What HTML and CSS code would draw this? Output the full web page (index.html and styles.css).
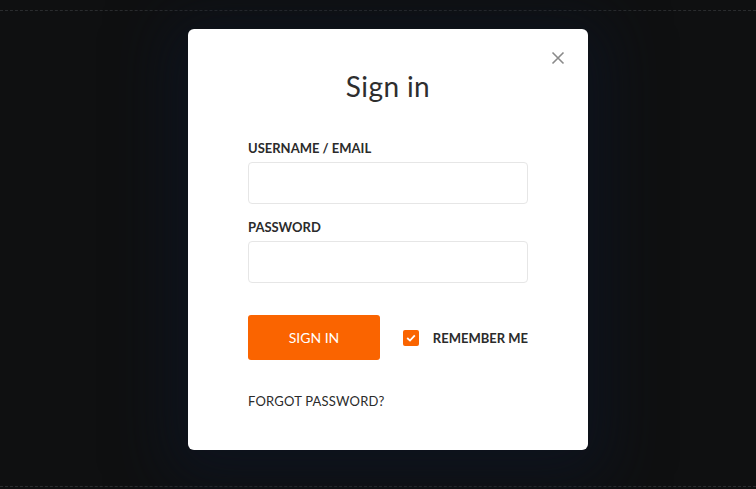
FILE: index.html
```html
<!DOCTYPE html>
<html lang="en">
<head>
  <meta charset="UTF-8" />
  <meta name="viewport" content="width=device-width, initial-scale=1.0" />
  <title>Sign in</title>
  <link rel="stylesheet" href="styles.css">
</head>
<body>
  <div class="page">
    <div class="modal">
      <button class="close" type="button" aria-label="Close">
        <svg width="14" height="14" viewBox="0 0 14 14"><path d="M1.5 1.5 L12.5 12.5 M12.5 1.5 L1.5 12.5" stroke="#8a8a8a" stroke-width="1.6" fill="none"/></svg>
      </button>
      <h2>Sign in</h2>
      <form>
        <label for="username">USERNAME / EMAIL</label>
        <input type="text" id="username" name="username" />

        <label for="password">PASSWORD</label>
        <input type="password" id="password" name="password" />

        <div class="actions">
          <button type="submit">SIGN IN</button>
          <label class="remember">
            <span class="box">
              <svg width="10" height="8" viewBox="0 0 10 8"><path d="M1.2 4 L4 6.6 L8.8 1.4" stroke="#fff" stroke-width="1.8" fill="none"/></svg>
            </span>
            REMEMBER ME
          </label>
        </div>

        <a class="forgot" href="#">FORGOT PASSWORD?</a>
      </form>
    </div>
  </div>
</body>
</html>
```

FILE: styles.css
```css
html, body {
  margin: 0;
  height: 100%;
}
body {
  background-color: #0f1011;
  font-family: Lato, "Noto Sans", sans-serif;
  color: #2b2b2b;
  overflow: hidden;
}
.page {
  margin-top: 10px;
  height: 477px;
  border-top: 1px dashed #2a2c2e;
  border-bottom: 1px dashed #2a2c2e;
  box-sizing: border-box;
  padding-top: 18px;
  padding-left: 188px;
}
.modal {
  position: relative;
  width: 400px;
  height: 421px;
  box-sizing: border-box;
  background: #ffffff;
  border-radius: 6px;
  padding: 40px 60px 0;
  box-shadow: 0 10px 60px 20px rgba(14, 22, 38, 0.6);
}
.close {
  position: absolute;
  top: 22px;
  right: 23px;
  background: none;
  border: none;
  padding: 0;
  width: 14px;
  height: 14px;
  cursor: pointer;
  display: flex;
}
h2 {
  margin: 0 0 37px;
  text-align: center;
  font-size: 28px;
  font-weight: 400;
  line-height: 34px;
  color: #2e2e2e;
  letter-spacing: 0.4px;
}
form {
  display: flex;
  flex-direction: column;
}
form > label {
  font-size: 13px;
  font-weight: 700;
  line-height: 16px;
  color: #2b2b2b;
  margin-bottom: 6px;
}
input[type="text"], input[type="password"] {
  width: 280px;
  height: 42px;
  border: 1px solid #e6e6e6;
  border-radius: 4px;
  box-sizing: border-box;
  margin: 0 0 15px;
  padding: 0 12px;
  font-size: 14px;
}
input[type="password"] {
  margin-bottom: 32px;
}
.actions {
  display: flex;
  align-items: center;
  justify-content: space-between;
}
button[type="submit"] {
  width: 132px;
  height: 45px;
  background-color: #fa6400;
  color: #fff;
  border: none;
  border-radius: 3px;
  font-family: inherit;
  font-size: 14px;
  font-weight: 400;
  cursor: pointer;
}
.remember {
  display: flex;
  align-items: center;
  gap: 14px;
  font-size: 13px;
  font-weight: 700;
  color: #2b2b2b;
}
.box {
  width: 16px;
  height: 16px;
  background-color: #fa6400;
  border-radius: 2px;
  display: flex;
  align-items: center;
  justify-content: center;
}
.forgot {
  margin-top: 33px;
  font-size: 13px;
  color: #2b2b2b;
  text-decoration: none;
  letter-spacing: 0.2px;
}
```
